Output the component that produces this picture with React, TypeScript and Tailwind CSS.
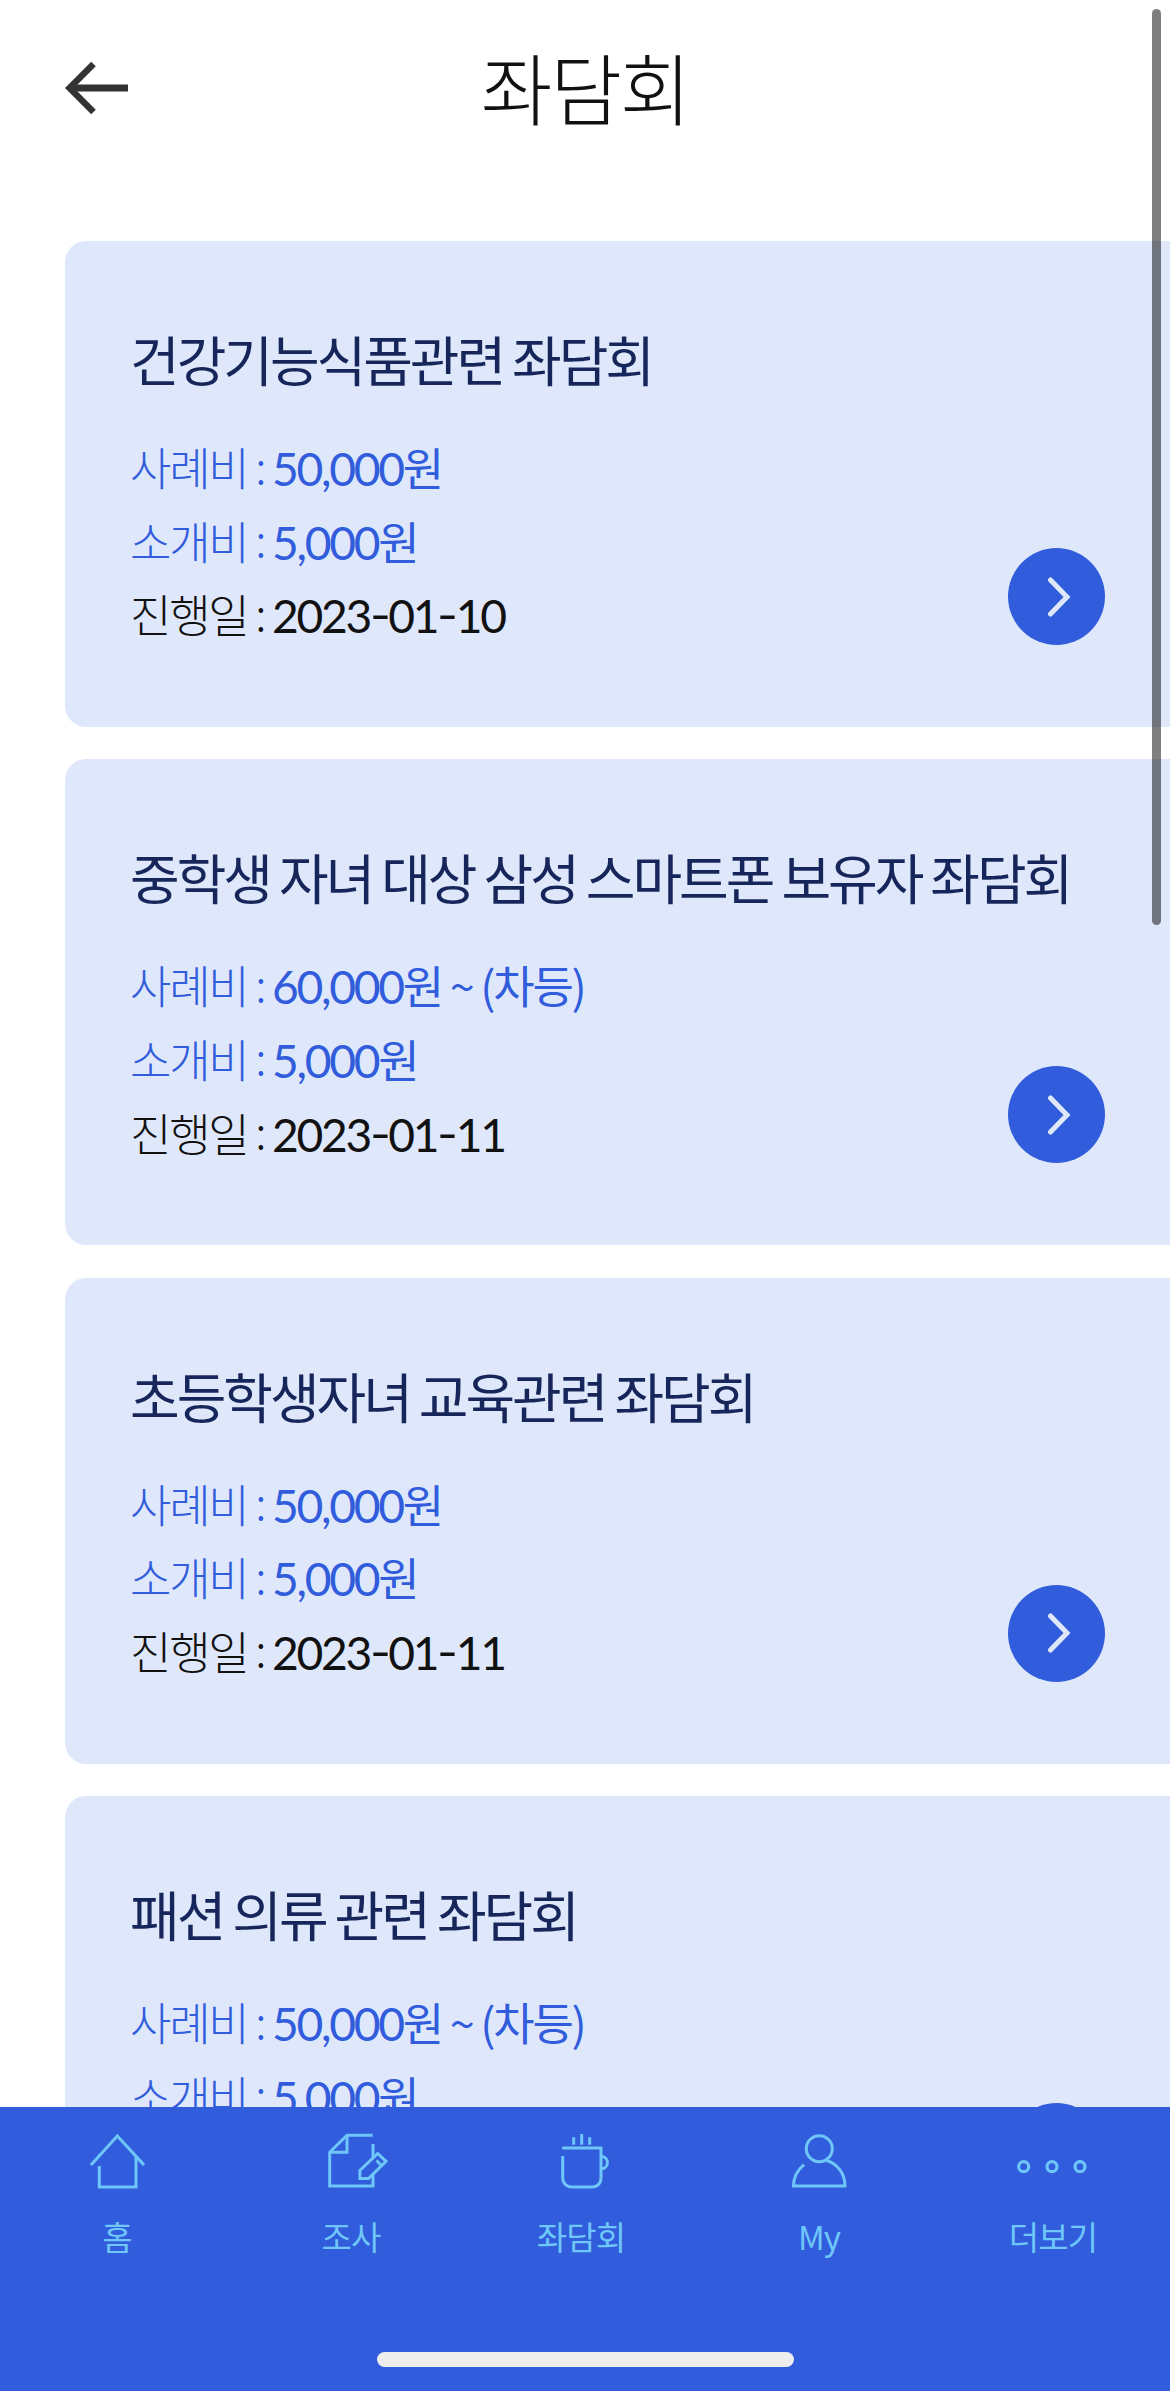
import React from 'react';

interface Meeting {
  title: string;
  reward: string;
  rewardUnit: string;
  referral: string;
  date: string;
}

const meetings: Meeting[] = [
  { title: '건강기능식품관련 좌담회', reward: '50,000', rewardUnit: '원', referral: '5,000', date: '2023-01-10' },
  { title: '중학생 자녀 대상 삼성 스마트폰 보유자 좌담회', reward: '60,000', rewardUnit: '원 ~ (차등)', referral: '5,000', date: '2023-01-11' },
  { title: '초등학생자녀 교육관련 좌담회', reward: '50,000', rewardUnit: '원', referral: '5,000', date: '2023-01-11' },
  { title: '패션 의류 관련 좌담회', reward: '50,000', rewardUnit: '원 ~ (차등)', referral: '5,000', date: '' },
];

const HomeIcon = () => (
  <svg width="56" height="58" viewBox="0 0 56 58" fill="none" stroke="currentColor" strokeWidth="3">
    <path d="M2 33 28.300 4 55 33" />
    <path d="M10.300 34V55H47V25" />
  </svg>
);

const SurveyIcon = () => (
  <svg width="74" height="58" viewBox="-1 0 74 58" fill="none" stroke="currentColor" strokeWidth="3">
    <path d="M57.700 3.300H32L14.700 20.300V54H58V43" />
    <path d="M32 3.300V20.300H14.700" />
    <path d="M58 12V25.500" />
    <path d="M62.700 21.500 71 29.300 53.500 46.500H44.900V38.500Z" />
    <path d="M61.500 28.500 66 33" />
  </svg>
);

const CupIcon = () => (
  <svg width="52" height="58" viewBox="0 0 52 58" fill="none" stroke="currentColor" strokeWidth="3">
    <path d="M3.200 16H42V46C42 51.500 38 55 33 55H13C8 55 3.700 51.500 3.700 46V24" />
    <path d="M14.700 5.300V12.700M22.700 2V12.700M30.700 5.300V12.700" />
    <path d="M43 24.500A6.200 6.200 0 0 1 43 36.800" />
  </svg>
);

const UserIcon = () => (
  <svg width="56" height="58" viewBox="0 0 56 58" fill="none" stroke="currentColor" strokeWidth="3">
    <circle cx="28.300" cy="16.700" r="13" />
    <path d="M13 32.700C6 38.500 2.500 45.500 2.500 54H54C54 41.500 46 31.500 35.500 28.500" />
  </svg>
);

const MoreIcon = () => (
  <svg width="72" height="58" viewBox="0 0 72 58" fill="none" stroke="currentColor" strokeWidth="3.200">
    <circle cx="6.700" cy="34.700" r="5" />
    <circle cx="35" cy="34.700" r="5" />
    <circle cx="63" cy="34.700" r="5" />
  </svg>
);

const tabs = [
  { label: '홈', icon: <HomeIcon />, labelClass: '' },
  { label: '조사', icon: <SurveyIcon />, labelClass: '' },
  { label: '좌담회', icon: <CupIcon />, labelClass: 'mr-[8px]' },
  { label: 'My', icon: <UserIcon />, labelClass: '' },
  { label: '더보기', icon: <MoreIcon />, labelClass: '' },
];

const InfoRow: React.FC<{ label: string; children: React.ReactNode }> = ({ label, children }) => (
  <p className="h-[73.600px] leading-[73.600px] whitespace-nowrap">
    <span className="font-light">
      {label} <span className="relative -top-[2.500px]">:</span>{' '}
    </span>
    {children}
  </p>
);

// Latin digits are set in Lato, Hangul stays in the base family
const Digits: React.FC<{ text: string }> = ({ text }) => (
  <span className="font-['Lato',sans-serif] text-[46.200px]">
    {text.split('-').map((part, i) => (
      <React.Fragment key={i}>
        {i > 0 && <span className="inline-block w-[18.300px] origin-[7px_50%] translate-x-[1.500px] -translate-y-[2px] scale-x-125 leading-none">-</span>}
        {part}
      </React.Fragment>
    ))}
  </span>
);

const MeetingCard: React.FC<{ meeting: Meeting }> = ({ meeting }) => (
  <li className="flex h-[486px] w-[1170px] shrink-0 rounded-[21px] bg-[#dfe8fb] pl-[65px]">
    <div className="w-[878px] shrink-0 pt-[78px]">
      <h2 className="h-[80px] text-[54px] leading-[80px] font-normal tracking-[-3.050px] whitespace-nowrap text-[#16255a]">
        {meeting.title}
      </h2>
      <div className="mt-[31px] text-[45px] tracking-[-2.250px] text-[#315cdb]">
        <InfoRow label="사례비">
          <Digits text={meeting.reward} />
          {meeting.rewardUnit}
        </InfoRow>
        <InfoRow label="소개비">
          <Digits text={meeting.referral} />원
        </InfoRow>
        {meeting.date && (
          <div className="text-[#111111]">
            <InfoRow label="진행일">
              <Digits text={meeting.date} />
            </InfoRow>
          </div>
        )}
      </div>
    </div>
    <button className="mt-[307px] flex size-[97px] shrink-0 items-center justify-center rounded-full bg-[#315cdb]">
      <svg width="24" height="40" viewBox="0 0 24 40" className="ml-[4px]" fill="none" stroke="#dfe8fb" strokeWidth="5" strokeLinecap="round">
        <path d="M3.500 3 20 20 3.500 37" />
      </svg>
    </button>
  </li>
);

const App: React.FC = () => {
  return (
    <div className="relative flex h-[2391px] w-[1170px] flex-col overflow-hidden bg-white font-['Noto_Sans_CJK_KR',sans-serif]">
      <header className="flex h-[241px] shrink-0 items-start justify-between px-[65px]">
        <button className="mt-[61px] w-[64px]">
          <svg width="64" height="54" viewBox="0 0 64 54" fill="none" stroke="#333333">
            <path d="M63 27H5" strokeWidth="7" />
            <path d="M28.500 3 4.500 27 28.500 51" strokeWidth="6.500" />
          </svg>
        </button>
        <h1 className="pt-[36px] text-[78px] leading-[100px] font-light tracking-[-2.340px] text-[#111111]">좌담회</h1>
        <div className="w-[64px]" />
      </header>

      <main className="min-h-0 grow overflow-hidden pl-[65px]">
        <ul className="flex flex-col gap-[32.400px]">
          {meetings.map((meeting) => (
            <MeetingCard key={meeting.title} meeting={meeting} />
          ))}
        </ul>
      </main>

      <footer className="flex h-[284px] shrink-0 flex-col items-center bg-[#315cdb]">
        <nav className="grid w-full grid-cols-5 text-[#6fc6f8]">
          {tabs.map((tab) => (
            <a key={tab.label} className="flex flex-col items-center pt-[25px]">
              {tab.icon}
              <span className={`mt-[22px] text-[33px] leading-[48px] tracking-[-0.900px] ${tab.labelClass}`}>{tab.label}</span>
            </a>
          ))}
        </nav>
        <div className="mt-[92px] h-[15px] w-[417px] rounded-full bg-[#ededed]" />
      </footer>

      {/* scroll indicator */}
      <div className="absolute top-[9px] left-[1152px] h-[916px] w-[9px] rounded-full bg-black/50" />
    </div>
  );
};

export default App;
